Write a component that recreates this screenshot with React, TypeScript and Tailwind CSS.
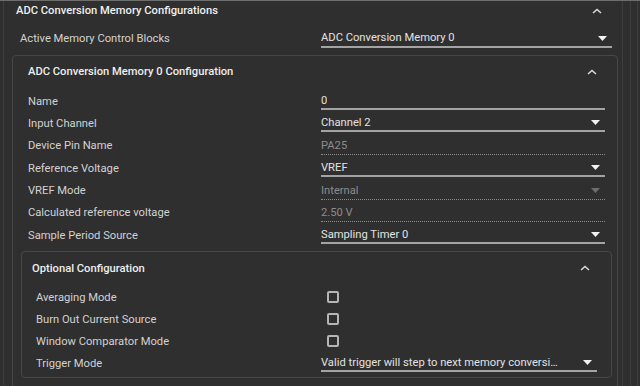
import React from 'react';

const ChevronUp = () => (
  <svg width="10" height="6" viewBox="0 0 10 6" className="block">
    <path d="M1 5 L5 1.5 L9 5" fill="none" stroke="#d8d8d8" strokeWidth="1.6" />
  </svg>
);

const ArrowDown = ({ dim = false }: { dim?: boolean }) => (
  <svg width="9" height="5" viewBox="0 0 9 5" className="block">
    <path d="M0 0 H9 L4.5 5 Z" fill={dim ? '#6e6e6e' : '#f2f2f2'} />
  </svg>
);

type Field =
  | { kind: 'text'; value: string }
  | { kind: 'select'; value: string }
  | { kind: 'readonly'; value: string }
  | { kind: 'readonlySelect'; value: string }
  | { kind: 'check' };

const FieldValue: React.FC<{ field: Field; width: string }> = ({ field, width }) => {
  if (field.kind === 'check') {
    return (
      <div className={`${width} flex items-center pl-[6px]`}>
        <div className="w-[12px] h-[12px] rounded-[2px] border-2 border-[#b5b5b5]" />
      </div>
    );
  }
  const disabled = field.kind === 'readonly' || field.kind === 'readonlySelect';
  const hasArrow = field.kind === 'select' || field.kind === 'readonlySelect';
  return (
    <div
      className={`${width} h-[18px] flex items-center justify-between ${
        disabled ? 'border-b border-dotted border-[#8a8a8a] mt-[1px]' : 'border-b-2 border-[#a3a3a3]'
      }`}
    >
      <span className={`truncate ${disabled ? 'text-[#8c8c8c]' : 'text-[#e2e2e2]'} ${hasArrow ? 'pr-[24px]' : ''}`}>
        {field.value}
      </span>
      {hasArrow && (
        <span className="mr-[5px] shrink-0">
          <ArrowDown dim={disabled} />
        </span>
      )}
    </div>
  );
};

const Row: React.FC<{ label: string; field: Field; labelW: string; valueW: string; h: string }> = ({
  label,
  field,
  labelW,
  valueW,
  h,
}) => (
  <div className={`flex items-center ${h}`}>
    <div className={`${labelW} text-[#d2d2d2]`}>{label}</div>
    <FieldValue field={field} width={valueW} />
  </div>
);

const memoryRows: { label: string; field: Field }[] = [
  { label: 'Name', field: { kind: 'text', value: '0' } },
  { label: 'Input Channel', field: { kind: 'select', value: 'Channel 2' } },
  { label: 'Device Pin Name', field: { kind: 'readonly', value: 'PA25' } },
  { label: 'Reference Voltage', field: { kind: 'select', value: 'VREF' } },
  { label: 'VREF Mode', field: { kind: 'readonlySelect', value: 'Internal' } },
  { label: 'Calculated reference voltage', field: { kind: 'readonly', value: '2.50 V' } },
  { label: 'Sample Period Source', field: { kind: 'select', value: 'Sampling Timer 0' } },
];

const optionalRows: { label: string; field: Field }[] = [
  { label: 'Averaging Mode', field: { kind: 'check' } },
  { label: 'Burn Out Current Source', field: { kind: 'check' } },
  { label: 'Window Comparator Mode', field: { kind: 'check' } },
  {
    label: 'Trigger Mode',
    field: { kind: 'select', value: 'Valid trigger will step to next memory conversion register' },
  },
];

export default function App() {
  return (
    <div className="w-[640px] h-[386px] overflow-hidden bg-[#2f2f2f] border-t border-[#6d6d6d] flex text-[11.2px] leading-none font-['Roboto',sans-serif]">
      <div className="w-[3px] shrink-0" />
      <div className="w-[620px] shrink-0 border-l border-r border-[#3e3e3e]">
        {/* Section header */}
        <div className="h-[19px] flex items-center justify-between pl-[12px] pr-[20px]">
          <span className="font-medium text-[#f0f0f0]">ADC Conversion Memory Configurations</span>
          <ChevronUp />
        </div>

        <div className="mt-[8px] pl-[16px]">
          <Row
            label="Active Memory Control Blocks"
            field={{ kind: 'select', value: 'ADC Conversion Memory 0' }}
            labelW="w-[301px]"
            valueW="w-[291px]"
            h="h-[22px]"
          />
        </div>

        {/* Memory 0 panel */}
        <div className="mt-[5px] ml-[8px] w-[606px] rounded-[4px] border border-[#474747] pb-[20px]">
          <div className="h-[32px] flex items-center justify-between pl-[15px] pr-[20px]">
            <span className="font-medium text-[#eeeeee]">ADC Conversion Memory 0 Configuration</span>
            <ChevronUp />
          </div>
          <div className="mt-[2px] pl-[15px]">
            {memoryRows.map((r) => (
              <Row key={r.label} label={r.label} field={r.field} labelW="w-[293px]" valueW="w-[284px]" h="h-[22.33px]" />
            ))}
          </div>

          {/* Optional configuration */}
          <div className="mt-[5px] ml-[8px] w-[591px] rounded-[4px] border border-[#474747] pb-[3px]">
            <div className="h-[32px] flex items-center justify-between pl-[10px] pr-[21px]">
              <span className="font-medium text-[#eeeeee]">Optional Configuration</span>
              <ChevronUp />
            </div>
            <div className="mt-[2px] pl-[14px]">
              {optionalRows.map((r) => (
                <Row key={r.label} label={r.label} field={r.field} labelW="w-[285px]" valueW="w-[276px]" h="h-[22px]" />
              ))}
            </div>
          </div>
        </div>
      </div>
      <div className="w-[8px] shrink-0 border-r border-[#3e3e3e]" />
      <div className="w-[7px] shrink-0 border-r border-[#3e3e3e]" />
    </div>
  );
}
